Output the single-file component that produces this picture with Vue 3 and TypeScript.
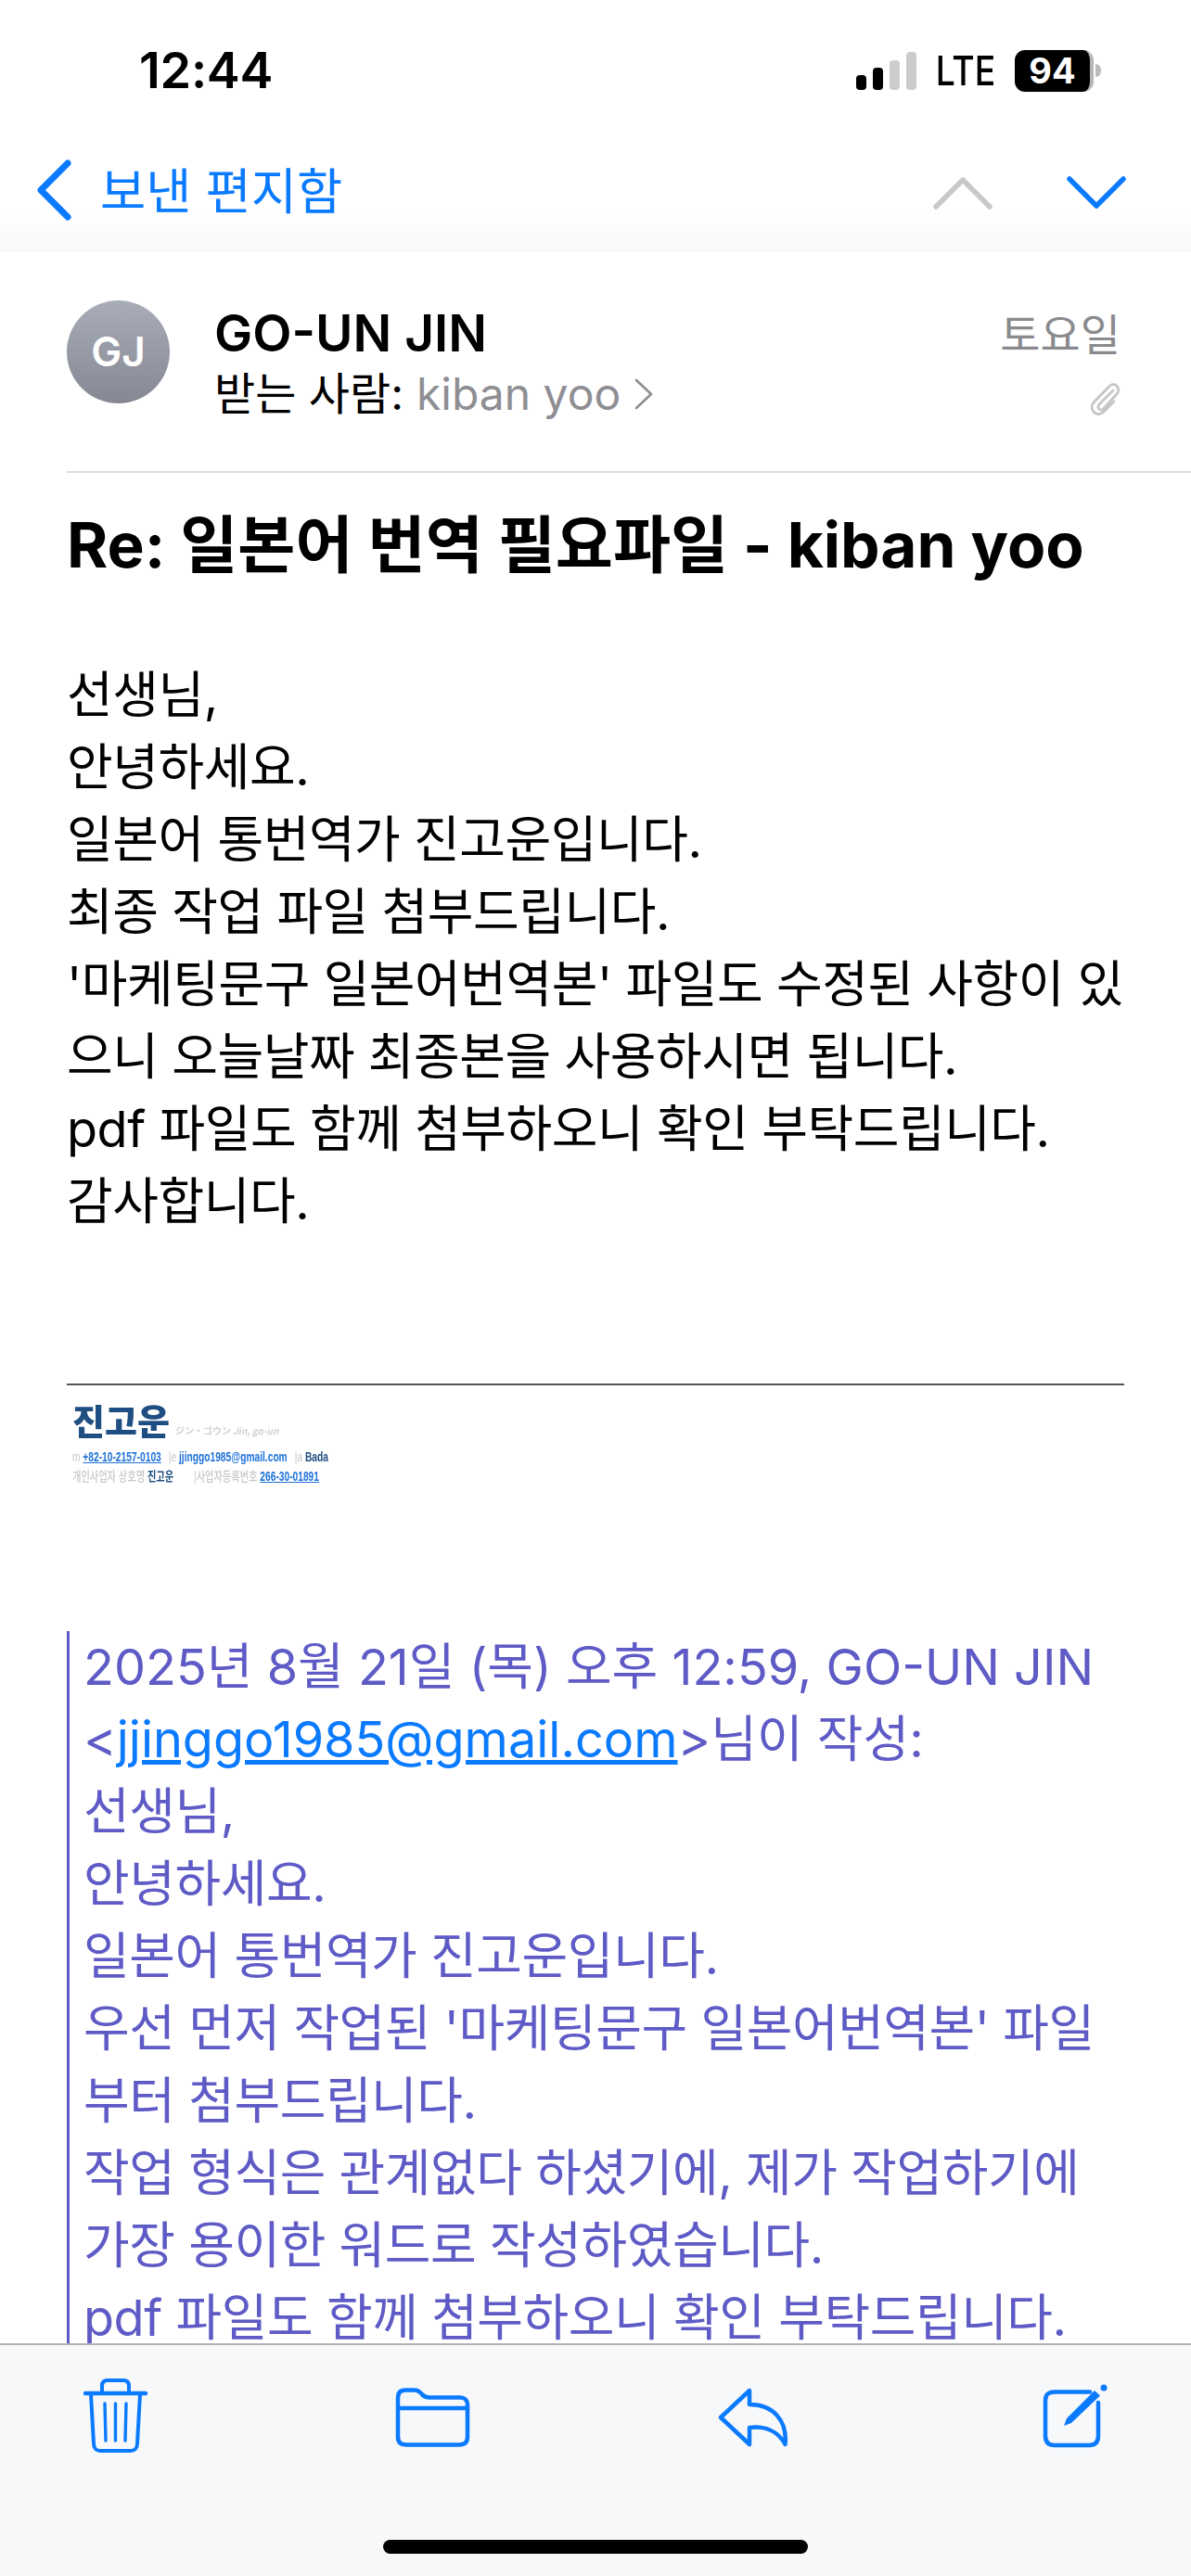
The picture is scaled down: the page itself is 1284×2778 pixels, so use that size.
<template>
  <div class="phone">
    <!-- Status bar and navigation -->
    <header class="top">
      <div class="status">
        <span class="time">12:44</span>
        <div class="status-right">
          <svg class="signal" width="65" height="41" viewBox="0 0 65 41">
            <rect x="0" y="25" width="11" height="16" rx="4" fill="#000" />
            <rect x="18" y="17" width="11" height="24" rx="4" fill="#000" />
            <rect x="36" y="9" width="11" height="32" rx="4" fill="#ccc" />
            <rect x="54" y="0" width="11" height="41" rx="4" fill="#ccc" />
          </svg>
          <span class="lte">LTE</span>
          <div class="battery">
            <span class="battery-level">94</span>
            <span class="battery-cap"></span>
          </div>
        </div>
      </div>
      <nav class="nav">
        <button class="back">
          <svg width="40" height="66" viewBox="0 0 40 66">
            <path d="M35 4 L6 33 L35 62" fill="none" stroke="#0a7aff" stroke-width="7" stroke-linecap="round" stroke-linejoin="round" />
          </svg>
          <span class="back-label">보낸 편지함</span>
        </button>
        <div class="nav-arrows">
          <svg width="64" height="36" viewBox="0 0 64 36">
            <path d="M3 33 L32 4 L61 33" fill="none" stroke="#c8c8c8" stroke-width="5.5" stroke-linecap="round" stroke-linejoin="round" />
          </svg>
          <svg width="64" height="36" viewBox="0 0 64 36">
            <path d="M3 3 L32 32 L61 3" fill="none" stroke="#0a7aff" stroke-width="5.5" stroke-linecap="round" stroke-linejoin="round" />
          </svg>
        </div>
      </nav>
    </header>

    <!-- Message -->
    <main class="message">
      <section class="sender">
        <div class="avatar">GJ</div>
        <div class="sender-info">
          <div class="sender-name">GO-UN JIN</div>
          <div class="recipient">
            받는 사람: <span class="recipient-name">kiban yoo</span>
            <svg width="22" height="36" viewBox="0 0 22 36">
              <path d="M3 3 L19 18 L3 33" fill="none" stroke="#8e8e93" stroke-width="2.6" stroke-linecap="round" stroke-linejoin="round" />
            </svg>
          </div>
        </div>
        <div class="sender-meta">
          <span class="date">토요일</span>
          <svg width="34" height="40" viewBox="0 0 34 40">
            <path d="M26 12 L11 27 C8 31 12 35 15.5 32 L30 16 C35 10 28 2 22 7.5 L5 25 C-1 33 9 42 16 35 L27 24" fill="none" stroke="#c6c6c8" stroke-width="2.8" stroke-linecap="round" />
          </svg>
        </div>
      </section>

      <h1 class="subject">Re: 일본어 번역 필요파일 - kiban yoo</h1>

      <div class="body">
        <div v-for="line in bodyLines" :key="line">{{ line }}</div>
      </div>

      <!-- Signature -->
      <div class="signature">
        <div class="sig-name">
          <b>진고운</b>
          <span class="sig-kana">ジン・ゴウン <i>Jin, go-un</i></span>
        </div>
        <div class="sig-rows">
          <div class="sig-row">
            <span class="sig-label">m</span> <a class="sig-link">+82-10-2157-0103</a>
            <span class="sig-label sig-gap">|e</span> <span class="sig-mail">jjinggo1985@gmail.com</span>
            <span class="sig-label sig-gap">|a</span> <span class="sig-dark">Bada</span>
          </div>
          <div class="sig-row">
            <span class="sig-label">개인사업자 상호명</span> <span class="sig-dark">진고운</span>
            <span class="sig-label sig-gap-wide">|사업자등록번호</span> <a class="sig-link">266-30-01891</a>
          </div>
        </div>
      </div>

      <!-- Quoted reply -->
      <blockquote class="quote">
        <div class="latin">2025년 8월 21일 (목) 오후 12:59, GO-UN JIN</div>
        <div class="latin">&lt;<a class="quote-link">jjinggo1985@gmail.com</a>&gt;님이 작성:</div>
        <div v-for="line in quoteLines" :key="line">{{ line }}</div>
      </blockquote>
    </main>

    <!-- Bottom toolbar -->
    <footer class="toolbar">
      <div class="tools">
        <svg width="69" height="80" viewBox="0 0 69 80" fill="none" stroke="#0a7aff" stroke-width="4" stroke-linecap="round" stroke-linejoin="round">
          <path d="M20 15 V8 C20 4 22 2 26 2 H43 C47 2 49 4 49 8 V15" />
          <path d="M2 16 H67" stroke-width="4.5" />
          <path d="M8 17 L11 70 C11 75 14 78 18 78 H51 C55 78 58 75 58 70 L61 17" />
          <path d="M23 27 L24 67 M34.5 27 V67 M46 27 L45 67" stroke-width="3.4" />
        </svg>
        <svg class="tool-low" width="81" height="64" viewBox="0 0 81 64" fill="none" stroke="#0a7aff" stroke-width="4.5" stroke-linecap="round" stroke-linejoin="round">
          <path d="M3 11 C3 5 6 2.500 11 2.500 H20 C25 2.500 26 4 29 7 C31 9.500 33 10.500 37 10.500 H70 C75 10.500 78 13.500 78 18 V53 C78 58.500 75 61.500 69 61.500 H12 C6 61.500 3 58.500 3 53 Z" />
          <path d="M3 22 H78" />
        </svg>
        <svg class="tool-low" width="77" height="64" viewBox="0 0 77 64" fill="none" stroke="#0a7aff" stroke-width="4.5" stroke-linecap="round" stroke-linejoin="round">
          <path d="M34 3 L3 32 L34 61 V43 C51 41 65 47 72.500 61 C75 36 60 18 34 18 Z" />
        </svg>
        <svg class="tool-compose" width="72" height="72" viewBox="0 0 72 72" fill="none" stroke="#0a7aff" stroke-width="4.5" stroke-linecap="round" stroke-linejoin="round">
          <path d="M51 9.500 H13 C6 9.500 3 12 3 19 V57 C3 63.500 6 67 13 67 H50 C57 67 60 63.500 60 57 V21" />
          <path d="M23 46 L26 38 L56 8 L62 13.500 L31 43 Z" fill="#0a7aff" stroke="none" />
          <circle cx="66" cy="5" r="3.500" fill="#0a7aff" stroke="none" />
        </svg>
      </div>
      <div class="home-indicator"></div>
    </footer>
  </div>
</template>

<script setup lang="ts">
const bodyLines: string[] = [
  '선생님,',
  '안녕하세요.',
  '일본어 통번역가 진고운입니다.',
  '최종 작업 파일 첨부드립니다.',
  "'마케팅문구 일본어번역본' 파일도 수정된 사항이 있",
  '으니 오늘날짜 최종본을 사용하시면 됩니다.',
  'pdf 파일도 함께 첨부하오니 확인 부탁드립니다.',
  '감사합니다.',
]

const quoteLines: string[] = [
  '선생님,',
  '안녕하세요.',
  '일본어 통번역가 진고운입니다.',
  "우선 먼저 작업된 '마케팅문구 일본어번역본' 파일",
  '부터 첨부드립니다.',
  '작업 형식은 관계없다 하셨기에, 제가 작업하기에',
  '가장 용이한 워드로 작성하였습니다.',
  'pdf 파일도 함께 첨부하오니 확인 부탁드립니다.',
]
</script>

<style>
html,
body {
  margin: 0;
  background: #fff;
}
</style>

<style scoped>
.phone {
  width: 1284px;
  height: 2778px;
  display: flex;
  flex-direction: column;
  overflow: hidden;
  background: #fff;
  color: #000;
  font-family: Inter, "Noto Sans CJK KR", sans-serif;
}

/* Status bar and nav */
.top {
  height: 272px;
  flex: none;
  box-sizing: border-box;
  background: linear-gradient(#fff 0, #fff 225px, #f8f8f8 272px);
}

.status {
  height: 160px;
  box-sizing: border-box;
  padding: 44px 97px 0 150px;
  display: flex;
  justify-content: space-between;
  align-items: flex-start;
}

.time {
  font-size: 54px;
  line-height: 64px;
  font-weight: 600;
  letter-spacing: -0.3px;
}

.status-right {
  display: flex;
  align-items: center;
  height: 64px;
}

.lte {
  font-size: 44px;
  font-weight: 500;
  margin: 0 15px;
  transform: scaleX(0.85);
}

.battery {
  display: flex;
  align-items: center;
}

.battery-level {
  width: 85px;
  height: 45px;
  box-sizing: border-box;
  background: #000;
  color: #fff;
  border-radius: 11px;
  border-right: 4px solid #b5b5b5;
  font-size: 38px;
  line-height: 45px;
  font-weight: 700;
  text-align: center;
}

.battery-cap {
  width: 6px;
  height: 14px;
  background: #bbb;
  border-radius: 0 7px 7px 0;
  margin-left: 2px;
}

.nav {
  height: 90px;
  display: flex;
  align-items: center;
  justify-content: space-between;
  padding: 0 70px 0 38px;
}

.back {
  display: flex;
  align-items: center;
  gap: 30px;
  padding: 0;
  border: 0;
  background: none;
  color: #0a7aff;
  font: inherit;
  font-size: 53.5px;
}

.back-label {
  margin-bottom: 6px;
}

.nav-arrows {
  display: flex;
  gap: 80px;
  margin-top: 6px;
}

/* Message */
.message {
  flex: 1;
  min-height: 0;
  overflow: hidden;
  padding: 52px 72px 0;
}

.sender {
  display: flex;
  height: 186px;
  box-sizing: border-box;
  border-bottom: 2px solid #ddd;
  margin-right: -72px;
}

.avatar {
  width: 111px;
  height: 111px;
  border-radius: 50%;
  background: linear-gradient(#a9adb8, #858892);
  color: #fff;
  font-size: 44px;
  font-weight: 600;
  line-height: 111px;
  text-align: center;
  flex: none;
}

.sender-info {
  margin-left: 48px;
  flex: 1;
}

.sender-name {
  font-size: 55px;
  line-height: 66px;
  font-weight: 600;
  margin-top: 2px;
}

.recipient {
  font-size: 48px;
  line-height: 66px;
  display: flex;
  align-items: center;
  gap: 14px;
}

.recipient-name {
  color: #8e8e93;
}

.sender-meta {
  width: 134px;
  margin-right: 76px;
  display: flex;
  flex-direction: column;
  align-items: flex-end;
  gap: 14px;
  padding-top: 3px;
}

.date {
  font-size: 47px;
  line-height: 68px;
  color: #8a8a8e;
}

.subject {
  margin: 39px 0 0;
  font-size: 67.5px;
  line-height: 78px;
  font-weight: 700;
  white-space: nowrap;
}

.body {
  margin-top: 84px;
  font-size: 54px;
  letter-spacing: -0.45px;
  line-height: 78px;
  white-space: nowrap;
}

/* Signature */
.signature {
  margin-top: 157px;
  border-top: 2px solid #555;
  padding: 15px 6px 0;
  height: 267px;
  box-sizing: border-box;
  font-family: "Liberation Sans", "Noto Sans CJK KR", sans-serif;
  font-size: 14px;
  line-height: 21px;
  font-weight: 700;
}

.sig-name {
  font-family: "Noto Sans CJK KR", sans-serif;
  height: 44px;
  filter: blur(0.4px);
}

.sig-name b {
  font-size: 38px;
  line-height: 44px;
  color: #1f4e82;
}

.sig-kana {
  margin-left: 6px;
  font-size: 10px;
  color: #d0d0d0;
}

.sig-rows {
  margin-top: 8px;
  transform: scaleX(0.73);
  transform-origin: left center;
  filter: blur(0.3px);
}

.sig-row {
  white-space: nowrap;
}

.sig-label {
  color: #c8c8c8;
  font-weight: 500;
}

.sig-gap {
  margin-left: 11px;
}

.sig-gap-wide {
  margin-left: 30px;
}

.sig-link {
  color: #1f72d8;
  text-decoration: underline;
}

.sig-mail {
  color: #1f72d8;
}

.sig-dark {
  color: #1f4e82;
}

/* Quoted reply */
.quote {
  margin: 0;
  border-left: 3px solid #5e5ac6;
  padding-left: 15px;
  color: #5e5ac6;
  font-size: 54px;
  letter-spacing: -0.45px;
  line-height: 78px;
  white-space: nowrap;
}

.latin {
  letter-spacing: 0;
}

.quote-link {
  color: #0a7aff;
  text-decoration: underline;
}

/* Toolbar */
.toolbar {
  flex: none;
  height: 251px;
  box-sizing: border-box;
  background: #f7f8fa;
  border-top: 2px solid #b4b4b6;
}

.tools {
  height: 210px;
  box-sizing: border-box;
  padding: 36px 0 0 90px;
  display: flex;
  gap: 267px;
  align-items: flex-start;
}

.tool-low {
  margin-top: 10px;
}

.tool-compose {
  margin: 5px 0 0 6px;
}

.home-indicator {
  width: 458px;
  height: 15px;
  margin: 0 auto;
  border-radius: 8px;
  background: #000;
}
</style>
